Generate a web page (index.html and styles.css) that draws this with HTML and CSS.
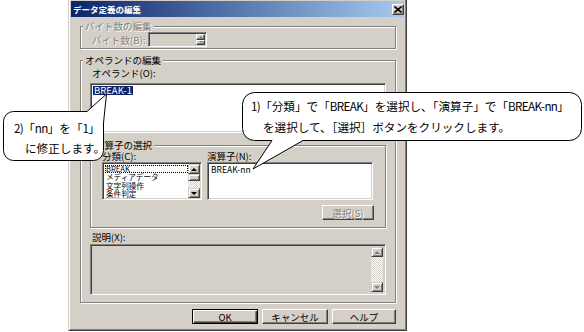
FILE: index.html
```html
<!DOCTYPE html>
<html lang="ja">

<head>
	<meta charset="UTF-8">
	<title>データ定義の編集</title>
	<link rel="stylesheet" href="styles.css">
</head>

<body>
	<div class="dialog">
		<div class="titlebar">
			<span class="title">データ定義の編集</span>
			<span class="close-btn">
				<svg width="8" height="7" viewBox="0 0 8 7"><path d="M0.5 0.5 L7.5 6.5 M7.5 0.5 L0.5 6.5" stroke="#000" stroke-width="1.6" fill="none"/></svg>
			</span>
		</div>

		<div class="group group-bytes">
			<div class="legend disabled">バイト数の編集</div>
			<div class="byte-row">
				<span class="byte-label disabled">バイト数(B):</span>
				<div class="spin">
					<div class="spin-btns">
						<span class="spin-btn up"></span>
						<span class="spin-btn down"></span>
					</div>
				</div>
			</div>
		</div>

		<div class="group group-operand">
			<div class="legend">オペランドの編集</div>
			<div class="label operand-label">オペランド(O):</div>
			<div class="field operand-field"><span class="selected-text">BREAK-1</span></div>

			<div class="group group-op">
				<div class="legend">演算子の選択</div>
				<div class="op-columns">
					<div class="op-col cat-col">
						<div class="label">分類(C):</div>
						<div class="field listbox">
							<ul class="items">
								<li class="focused">BREAK</li>
								<li>メディアデータ</li>
								<li>文字列操作</li>
								<li>条件判定</li>
							</ul>
							<div class="vscroll">
								<span class="sb-btn up"></span>
								<span class="sb-thumb"></span>
								<span class="sb-track"></span>
								<span class="sb-btn down"></span>
							</div>
						</div>
					</div>
					<div class="op-col func-col">
						<div class="label">演算子(N):</div>
						<div class="field listbox">
							<ul class="items items-func">
								<li>BREAK-nn</li>
							</ul>
						</div>
					</div>
				</div>
				<div class="select-row">
					<button class="btn btn-select disabled">選択(S)</button>
				</div>
			</div>

			<div class="label desc-label">説明(X):</div>
			<div class="field desc-field">
				<div class="vscroll off">
					<span class="sb-btn up"></span>
					<span class="sb-track"></span>
					<span class="sb-btn down"></span>
				</div>
			</div>
		</div>

		<div class="dialog-buttons">
			<button class="btn btn-ok">OK</button>
			<button class="btn btn-cancel">キャンセル</button>
			<button class="btn btn-help">ヘルプ</button>
		</div>
	</div>

	<!-- callouts -->
	<div class="callout callout-select">
		<svg class="bubble" width="340" height="78" viewBox="0 0 340 78">
			<path d="M12.5 0.5 H327.5 A12 12 0 0 1 339.5 12.5 V36.5 A12 12 0 0 1 327.5 48.5 H61 L11 77 L30 48.5 H12.5 A12 12 0 0 1 0.5 36.5 V12.5 A12 12 0 0 1 12.5 0.5 Z" fill="#fff" stroke="#000" stroke-width="1"/>
		</svg>
		<div class="callout-line"><span class="lat">1)</span>「分類」で「<span class="lat">BREAK</span>」を選択し、「演算子」で「<span class="lat">BREAK-nn</span>」</div>
		<div class="callout-line second">を選択して、［選択］ボタンをクリックします。</div>
	</div>

	<div class="callout callout-edit">
		<svg class="bubble bubble-up" width="104" height="68" viewBox="0 -18 104 68">
			<path d="M10.5 0.5 H84 L103.5 -17 L100.5 12 V39.5 A10 10 0 0 1 90.5 49.5 H10.5 A10 10 0 0 1 0.5 39.5 V10.5 A10 10 0 0 1 10.5 0.5 Z" fill="#fff" stroke="#000" stroke-width="1"/>
		</svg>
		<div class="callout-line"><span class="lat">2)</span>「<span class="lat">nn</span>」を「<span class="lat">1</span>」</div>
		<div class="callout-line second">に修正します。</div>
	</div>
</body>

</html>
```

FILE: styles.css
```css
body {
	margin: 0;
	width: 584px;
	height: 332px;
	position: relative;
	overflow: hidden;
	background: #fff;
	color: #000;
	font-family: "Noto Sans CJK JP", "Liberation Sans", sans-serif;
}

/* window */

.dialog {
	margin-left: 68px;
	width: 339px;
	height: 331px;
	box-sizing: border-box;
	padding: 1px 2px 0;
	background: #d4d0c8;
	border-left: 1px solid #d4d0c8;
	border-right: 1px solid #404040;
	border-bottom: 1px solid #404040;
	box-shadow: inset 1px 0 #fff, inset -1px -1px #808080;
	font-size: 9.5px;
}

.titlebar {
	height: 16px;
	display: flex;
	align-items: center;
	justify-content: space-between;
	padding: 0 0 0 2px;
	background: linear-gradient(to right, #0a246a, #a6caf0);
}

.title {
	color: #fff;
	font-weight: bold;
	font-size: 8.5px;
	line-height: 16px;
}

.close-btn {
	width: 12px;
	height: 11px;
	box-sizing: border-box;
	display: flex;
	align-items: center;
	justify-content: center;
	background: #d4d0c8;
	border: 1px solid;
	border-color: #fff #404040 #404040 #fff;
	box-shadow: inset -1px -1px #808080;
}

.disabled {
	color: #808080;
	text-shadow: 1px 1px 0 #fff;
}

/* group boxes */

.group {
	box-sizing: border-box;
	border: 1px solid #808080;
	box-shadow: inset 1px 1px #fff, 1px 1px #fff;
}

.legend {
	display: table;
	margin: -6px 0 0 2px;
	padding: 0 2px;
	line-height: 11px;
	background: #d4d0c8;
}

.label {
	line-height: 11px;
}

.group-bytes,
.group-operand {
	margin-left: 9px;
	width: 316px;
}

.group-bytes {
	margin-top: 9px;
	padding-bottom: 1px;
}

.byte-row {
	display: flex;
	align-items: center;
	height: 15px;
	padding-left: 11px;
}

.byte-label {
	width: 56px;
}

.group-operand {
	margin-top: 11px;
	padding-bottom: 7px;
}

.operand-label {
	margin: 2px 0 0 11px;
}

/* sunken fields */

.field {
	box-sizing: border-box;
	background: #fff;
	border: 1px solid;
	border-color: #808080 #fff #fff #808080;
	box-shadow: inset 1px 1px #404040, inset -1px -1px #d4d0c8;
}

.operand-field {
	margin: 4px 0 0 9px;
	width: 296px;
	height: 50px;
	padding: 2px;
	line-height: 9px;
}

.selected-text {
	display: inline-block;
	padding: 0 1px;
	background: #0a246a;
	color: #fff;
}

.spin {
	width: 59px;
	height: 15px;
	box-sizing: border-box;
	display: flex;
	justify-content: flex-end;
	padding: 1px;
	background: #d4d0c8;
	border: 1px solid;
	border-color: #808080 #fff #fff #808080;
	box-shadow: inset 1px 1px #404040, inset -1px -1px #d4d0c8;
}

.spin-btns {
	width: 9px;
	display: flex;
	flex-direction: column;
}

.spin-btn {
	flex: 1;
	box-sizing: border-box;
	display: flex;
	align-items: center;
	justify-content: center;
	background: #d4d0c8;
	border: 1px solid;
	border-color: #fff #404040 #404040 #fff;
	box-shadow: inset -1px -1px #808080;
}

.spin-btn::after {
	content: "";
	border-left: 2px solid transparent;
	border-right: 2px solid transparent;
}

.spin-btn.up::after {
	border-bottom: 2px solid #808080;
}

.spin-btn.down::after {
	border-top: 2px solid #808080;
}

/* operator selection */

.group-op {
	margin: 12px 0 0 9px;
	width: 296px;
	padding-bottom: 7px;
}

.op-columns {
	display: flex;
	gap: 5px;
	padding-left: 11px;
}

.cat-col {
	width: 100px;
}

.func-col {
	width: 166px;
}

.listbox {
	display: flex;
	height: 38px;
	padding: 1px;
}

.items {
	flex: 1;
	list-style: none;
	margin: 0;
	padding: 1px 0 0 1px;
	overflow: hidden;
	font-size: 7.6px;
	line-height: 8.25px;
}

.items-func {
	font-size: 8.5px;
	line-height: 9px;
}

.items li {
	padding-left: 1px;
}

.items li.focused {
	outline: 1px dotted #000;
	outline-offset: -1px;
}

.vscroll {
	width: 12px;
	display: flex;
	flex-direction: column;
}

.sb-btn,
.sb-thumb {
	box-sizing: border-box;
	background: #d4d0c8;
	border: 1px solid;
	border-color: #d4d0c8 #404040 #404040 #d4d0c8;
	box-shadow: inset 1px 1px #fff, inset -1px -1px #808080;
}

.sb-btn {
	height: 10px;
	display: flex;
	align-items: center;
	justify-content: center;
}

.sb-btn::after {
	content: "";
	border-left: 3px solid transparent;
	border-right: 3px solid transparent;
}

.sb-btn.up::after {
	border-bottom: 3px solid #000;
}

.sb-btn.down::after {
	border-top: 3px solid #000;
}

.vscroll.off .sb-btn.up::after {
	border-bottom-color: #808080;
}

.vscroll.off .sb-btn.down::after {
	border-top-color: #808080;
}

.sb-thumb {
	height: 7px;
}

.sb-track {
	flex: 1;
	background-color: #d4d0c8;
	background-image: conic-gradient(#fff 25%, #d4d0c8 0 50%, #fff 0 75%, #d4d0c8 0);
	background-size: 2px 2px;
}

.select-row {
	display: flex;
	justify-content: flex-end;
	margin-top: 5px;
	padding-right: 11px;
}

.desc-label {
	margin: 4px 0 0 11px;
}

.desc-field {
	display: flex;
	justify-content: flex-end;
	margin: 1px 0 0 9px;
	width: 296px;
	height: 51px;
	padding: 2px;
	background: #d4d0c8;
}

/* buttons */

.btn {
	height: 15px;
	box-sizing: border-box;
	display: flex;
	align-items: center;
	justify-content: center;
	padding: 0;
	margin: 0;
	font: inherit;
	color: #000;
	background: #d4d0c8;
	border: 1px solid;
	border-color: #fff #404040 #404040 #fff;
	box-shadow: inset -1px -1px #808080;
}

.btn.disabled {
	color: #808080;
}

.btn-select {
	width: 52px;
}

.dialog-buttons {
	display: flex;
	justify-content: flex-end;
	gap: 4px;
	margin-top: 6px;
	padding-right: 8px;
}

.btn-ok,
.btn-cancel {
	width: 66px;
}

.btn-help {
	width: 64px;
}

.btn-ok {
	border-color: #000;
	box-shadow: inset 1px 1px #fff, inset -1px -1px #404040, inset -2px -2px #808080;
}

/* callouts */

.callout {
	position: absolute;
	box-sizing: border-box;
	font-size: 11.6px;
	line-height: 20px;
}

.bubble {
	position: absolute;
	left: 0;
	top: 0;
	overflow: visible;
}

.bubble-up {
	top: -18px;
}

.callout-line {
	position: relative;
	white-space: nowrap;
}

.lat {
	letter-spacing: -0.6px;
}

.callout-select {
	left: 242px;
	top: 92px;
	width: 340px;
	height: 49px;
	padding-top: 4px;
}

.callout-select .callout-line {
	padding-left: 9px;
}

.callout-select .callout-line.second {
	padding-left: 21px;
	padding-top: 1px;
}

.callout-edit {
	left: 3px;
	top: 111px;
	width: 101px;
	height: 50px;
	padding-top: 7px;
}

.callout-edit .callout-line {
	padding-left: 11px;
}

.callout-edit .callout-line.second {
	padding-left: 22px;
}
```
